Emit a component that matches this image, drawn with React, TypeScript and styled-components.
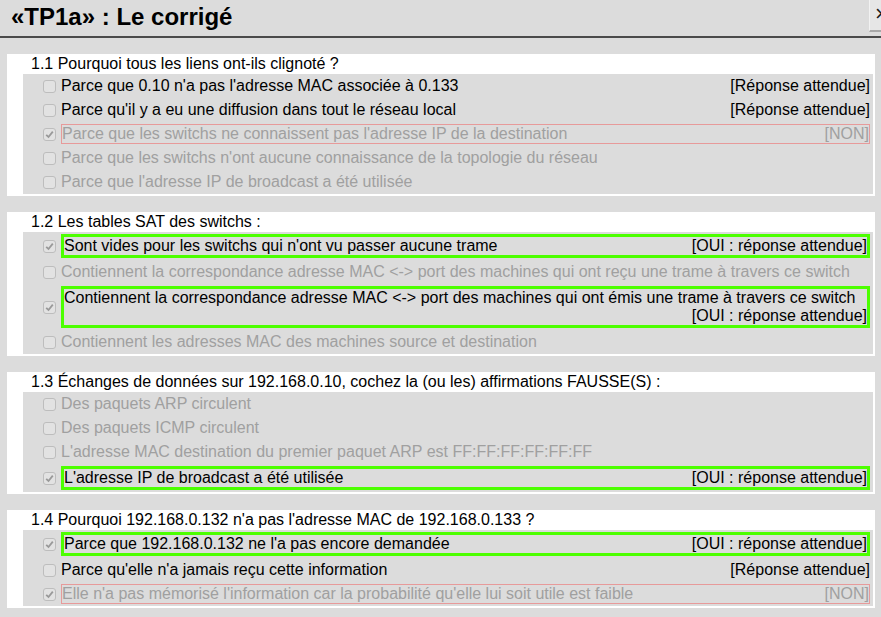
import React from "react";
import styled, { createGlobalStyle, css } from "styled-components";

const Global = createGlobalStyle`
  html, body { margin: 0; padding: 0; background: #dcdcdc; overflow: hidden; }
  body { font-family: "Liberation Sans", Arial, sans-serif; color: #000; }
`;

const Page = styled.div`
  width: 881px;
  height: 617px;
  background: #dcdcdc;
  overflow: hidden;
`;

const Header = styled.header`
  display: flex;
  align-items: flex-start;
  justify-content: space-between;
  height: 36px;
  border-bottom: 2px solid #4a4a4a;
  overflow: hidden;
`;

const Title = styled.h1`
  margin: 0;
  padding: 3px 11px 0;
  font-size: 24px;
  line-height: 28px;
  font-weight: bold;
`;

const Close = styled.button`
  width: 26px;
  height: 32px;
  margin-right: -14px;
  padding: 0 0 2px 5px;
  text-align: left;
  border: none;
  border-left: 1px solid #f2f2f2;
  border-bottom: 2px solid #a8a8a8;
  background: #e6e6e6;
  font-family: "Liberation Sans", Arial, sans-serif;
  font-size: 22px;
  line-height: 28px;
  color: #1a1a1a;
`;

const Main = styled.main`
  display: flex;
  flex-direction: column;
  gap: 16px;
  padding: 16px 6px 0 7px;
`;

const Panel = styled.section`
  background: #fff;
  padding: 0 2px 2px 16px;
`;

const Question = styled.div`
  padding: 1px 0 1px 8px;
  font-size: 16px;
  line-height: 18px;
`;

const List = styled.div`
  background: #dcdcdc;
  display: flex;
  flex-direction: column;
  padding-right: 3px;
`;

const Row = styled.div`
  display: flex;
  align-items: center;
  padding: 2px 0 2px 20px;
  gap: 5px;
`;

const Box = styled.span`
  flex: none;
  width: 11px;
  height: 11px;
  border: 1px solid #bdbdbd;
  border-radius: 3px;
  background: #e2e2e2;
  display: flex;
  align-items: center;
  justify-content: center;
`;

type Kind = "plain" | "good" | "bad";

const Label = styled.div<{ $kind: Kind; $dim: boolean }>`
  flex: 1;
  display: flex;
  flex-wrap: wrap;
  font-size: 16px;
  line-height: 18px;
  color: ${(p) => (p.$dim ? "#a0a0a0" : "#000")};
  ${(p) =>
    p.$kind === "plain" &&
    css`
      padding: 1px 0;
    `}
  ${(p) =>
    p.$kind === "bad" &&
    css`
      border: 1px solid #e79a9a;
    `}
  ${(p) =>
    p.$kind === "good" &&
    css`
      border: 3px solid #4cff00;
    `}
`;

const Tag = styled.span`
  margin-left: auto;
  white-space: nowrap;
`;

type Item = {
  text: string;
  checked?: boolean;
  dim?: boolean;
  kind?: Kind;
  tag?: string;
};

type Q = { title: string; items: Item[] };

const ATT = "[Réponse attendue]";
const OUI = "[OUI : réponse attendue]";

const data: Q[] = [
  {
    title: "1.1 Pourquoi tous les liens ont-ils clignoté ?",
    items: [
      { text: "Parce que 0.10 n'a pas l'adresse MAC associée à 0.133", tag: ATT },
      { text: "Parce qu'il y a eu une diffusion dans tout le réseau local", tag: ATT },
      {
        text: "Parce que les switchs ne connaissent pas l'adresse IP de la destination",
        checked: true,
        dim: true,
        kind: "bad",
        tag: "[NON]",
      },
      { text: "Parce que les switchs n'ont aucune connaissance de la topologie du réseau", dim: true },
      { text: "Parce que l'adresse IP de broadcast a été utilisée", dim: true },
    ],
  },
  {
    title: "1.2 Les tables SAT des switchs :",
    items: [
      { text: "Sont vides pour les switchs qui n'ont vu passer aucune trame", checked: true, kind: "good", tag: OUI },
      {
        text: "Contiennent la correspondance adresse MAC <-> port des machines qui ont reçu une trame à travers ce switch",
        dim: true,
      },
      {
        text: "Contiennent la correspondance adresse MAC <-> port des machines qui ont émis une trame à travers ce switch",
        checked: true,
        kind: "good",
        tag: OUI,
      },
      { text: "Contiennent les adresses MAC des machines source et destination", dim: true },
    ],
  },
  {
    title: "1.3 Échanges de données sur 192.168.0.10, cochez la (ou les) affirmations FAUSSE(S) :",
    items: [
      { text: "Des paquets ARP circulent", dim: true },
      { text: "Des paquets ICMP circulent", dim: true },
      { text: "L'adresse MAC destination du premier paquet ARP est FF:FF:FF:FF:FF:FF", dim: true },
      { text: "L'adresse IP de broadcast a été utilisée", checked: true, kind: "good", tag: OUI },
    ],
  },
  {
    title: "1.4 Pourquoi 192.168.0.132 n'a pas l'adresse MAC de 192.168.0.133 ?",
    items: [
      { text: "Parce que 192.168.0.132 ne l'a pas encore demandée", checked: true, kind: "good", tag: OUI },
      { text: "Parce qu'elle n'a jamais reçu cette information", tag: ATT },
      {
        text: "Elle n'a pas mémorisé l'information car la probabilité qu'elle lui soit utile est faible",
        checked: true,
        dim: true,
        kind: "bad",
        tag: "[NON]",
      },
    ],
  },
];

const Check = () => (
  <svg width="9" height="9" viewBox="0 0 9 9">
    <path d="M1.2 4.8 L3.5 7 L7.8 1.6" fill="none" stroke="#999" strokeWidth="1.8" />
  </svg>
);

export default function App() {
  return (
    <Page>
      <Global />
      <Header>
        <Title>«TP1a» : Le corrigé</Title>
        <Close>×</Close>
      </Header>
      <Main>
        {data.map((q) => (
          <Panel key={q.title}>
            <Question>{q.title}</Question>
            <List>
              {q.items.map((it) => (
                <Row key={it.text}>
                  <Box>{it.checked && <Check />}</Box>
                  <Label $kind={it.kind ?? "plain"} $dim={!!it.dim}>
                    <span>{it.text}</span>
                    {it.tag && <Tag>{it.tag}</Tag>}
                  </Label>
                </Row>
              ))}
            </List>
          </Panel>
        ))}
      </Main>
    </Page>
  );
}
